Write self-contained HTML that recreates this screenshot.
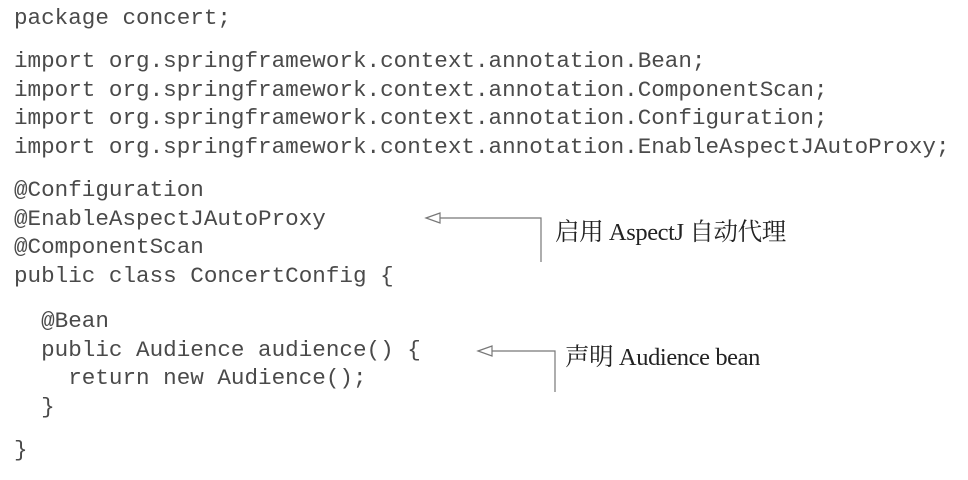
<!DOCTYPE html>
<html><head><meta charset="utf-8"><style>
body{margin:0;width:968px;height:480px;background:#fff;position:relative;overflow:hidden}
.c{position:absolute;left:14px;font-family:"Liberation Mono",monospace;font-size:22.6px;line-height:28.5px;color:#4a4a4a;white-space:pre}
.l{position:absolute;font-family:"Liberation Serif","Noto Serif CJK SC",serif;font-size:24.5px;color:#222;white-space:pre;letter-spacing:-0.4px}
</style></head><body>
<div class="c" style="top:4px">package concert;</div>
<div class="c" style="top:47px">import org.springframework.context.annotation.Bean;
import org.springframework.context.annotation.ComponentScan;
import org.springframework.context.annotation.Configuration;
import org.springframework.context.annotation.EnableAspectJAutoProxy;</div>
<div class="c" style="top:176px">@Configuration
@EnableAspectJAutoProxy
@ComponentScan
public class ConcertConfig {</div>
<div class="c" style="top:307px">  @Bean
  public Audience audience() {
    return new Audience();
  }</div>
<div class="c" style="top:436px">}</div>
<svg width="968" height="480" style="position:absolute;left:0;top:0">
<g stroke="#777" stroke-width="1.2" fill="none">
<path d="M426 218 L440 213 L440 223 Z"/><path d="M440 218 H541 V262"/>
<path d="M478 351 L492 346 L492 356 Z"/><path d="M492 351 H555 V392"/>
</g></svg>
<div class="l" style="left:555px;top:213px">启用 AspectJ 自动代理</div>
<div class="l" style="left:565px;top:338px">声明 Audience bean</div>
</body></html>
